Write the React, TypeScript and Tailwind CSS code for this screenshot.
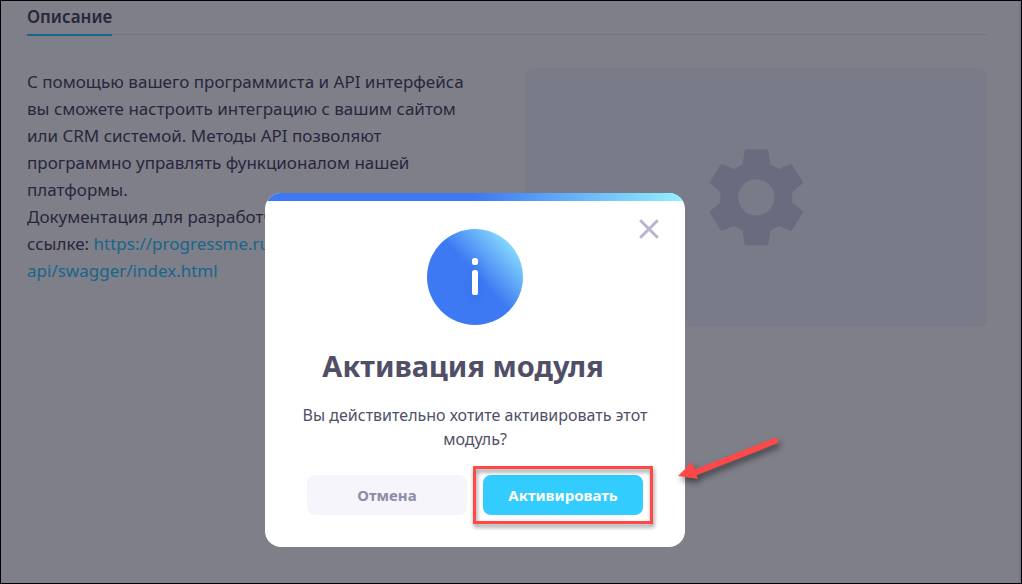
import { ReactNode } from "react";

const GearIcon = () => (
  <svg viewBox="54 58 286 290" className="w-24" fill="#d6d6ec" aria-hidden="true">
    <path
      stroke="#d6d6ec"
      strokeWidth="8"
      strokeLinejoin="round"
      fillRule="evenodd"
      d="M167 63H230L236 106L265 122L301 106L333 158L301 185V219L333 246L301 298L265 283L236 299L230 341H167L161 299L132 283L95 298L63 246L95 219V185L63 158L95 106L132 122L161 106Z
      M198 144a58 58 0 1 0 0 116a58 58 0 1 0 0-116Z"
    />
  </svg>
);

const InfoIcon = () => (
  <svg width="96" height="96" viewBox="0 0 96 96" aria-hidden="true">
    <defs>
      <linearGradient id="info-bg" x1="12" y1="84" x2="90" y2="12" gradientUnits="userSpaceOnUse">
        <stop offset="0.5" stopColor="#3d79f2" />
        <stop offset="1" stopColor="#8fe6ff" />
      </linearGradient>
      <filter id="info-shadow" x="-200%" y="-50%" width="500%" height="200%">
        <feDropShadow dx="0" dy="4" stdDeviation="4" floodColor="#2152c4" floodOpacity="0.25" />
      </filter>
    </defs>
    <circle cx="48" cy="48" r="48" fill="url(#info-bg)" />
    <g fill="#fff" filter="url(#info-shadow)">
      <rect x="45" y="29" width="6" height="7" rx="2.6" />
      <rect x="45" y="41" width="6" height="25" rx="2.6" />
    </g>
  </svg>
);

const CloseIcon = () => (
  <svg width="20" height="20" viewBox="0 0 20 20" aria-hidden="true">
    <path d="M1.2 1.2L18.8 18.8M18.8 1.2L1.2 18.8" stroke="#b8b6cf" strokeWidth="3" />
  </svg>
);

const Arrow = () => (
  <svg
    width="112"
    height="56"
    viewBox="0 0 112 56"
    className="absolute top-[431px] left-[671px] drop-shadow-[2px_4px_3px_rgba(0,0,0,0.5)]"
    aria-hidden="true"
  >
    <path d="M22 41L103 9" stroke="#ff4848" strokeWidth="6" strokeLinecap="round" />
    <path d="M6 44L20 30L26 47Z" fill="#ff4848" />
  </svg>
);

interface HighlightProps {
  children: ReactNode;
}
const Highlight = ({ children }: HighlightProps) => (
  <div className="relative">
    {children}
    <div className="pointer-events-none absolute -inset-x-[10px] -inset-y-[9px] border-3 border-[#ff4848] drop-shadow-[1px_3px_2px_rgba(0,0,0,0.45)]" />
  </div>
);

const Description = () => (
  <main className="px-[26px] pt-1 pr-8">
    <nav className="flex h-[30px] border-b border-[#ebe8ff]">
      <a
        href="#description"
        className="h-[31px] border-b-2 border-[#33ccff] text-[17px] leading-6 font-semibold"
      >
        Описание
      </a>
    </nav>
    <section id="description" className="mt-[33px] grid grid-cols-2 gap-9">
      <p className="text-[17px] leading-[27px] whitespace-nowrap">
        С помощью вашего программиста и API интерфейса
        <br />
        вы сможете настроить интеграцию с вашим сайтом
        <br />
        или CRM системой. Методы API позволяют
        <br />
        программно управлять функционалом нашей
        <br />
        платформы.
        <br />
        Документация для разработчиков по
        <br />
        ссылке:{" "}
        <a href="#api" className="text-[#33ccff]">
          https://progressme.ru/
          <br />
          api/swagger/index.html
        </a>
      </p>
      <div className="flex h-[259px] items-center justify-center rounded-lg bg-[#f4f6ff]">
        <GearIcon />
      </div>
    </section>
  </main>
);

const ActivationModal = () => (
  <div
    role="dialog"
    aria-modal="true"
    aria-labelledby="modal-title"
    className="relative w-[420px] overflow-hidden rounded-2xl bg-white pb-8"
  >
    <div className="h-2 bg-[linear-gradient(90deg,#3d79f2_50%,#93f1ff)]" />
    <button type="button" aria-label="Закрыть" className="absolute top-[26px] right-[26px]">
      <CloseIcon />
    </button>
    <div className="flex flex-col items-center px-8 pt-7 text-center">
      <InfoIcon />
      <h2 id="modal-title" className="mt-6 pr-6 text-[29px] leading-[34px] font-bold">
        Активация модуля
      </h2>
      <p className="mt-5 text-base leading-6">
        Вы действительно хотите активировать этот
        <br />
        модуль?
      </p>
      <div className="mt-6 flex gap-4 text-[15px] font-bold">
        <button type="button" className="h-10 w-40 rounded-lg bg-[#f5f5fb] text-[#8e8ca7]">
          Отмена
        </button>
        <Highlight>
          <button type="button" className="h-10 w-40 rounded-lg bg-[#33ccff] text-white">
            Активировать
          </button>
        </Highlight>
      </div>
    </div>
  </div>
);

export default function App() {
  return (
    <div className="relative min-h-screen border border-black bg-white font-['Noto_Sans',sans-serif] text-[#514f67]">
      <div className="min-h-[582px] border-r-2 border-[#ebe8ff]">
        <Description />
      </div>
      <div className="absolute inset-0 flex items-start justify-center bg-[#000014]/50 pt-48 pr-[72px]">
        <ActivationModal />
      </div>
      <Arrow />
    </div>
  );
}
